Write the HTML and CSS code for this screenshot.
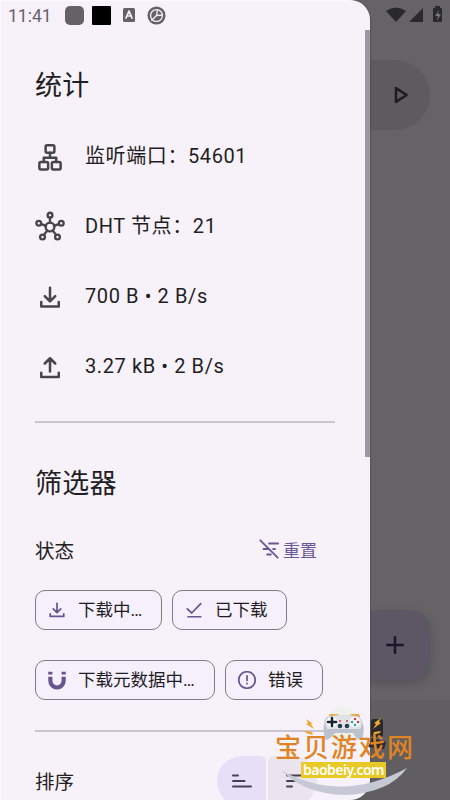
FILE: index.html
```html
<!DOCTYPE html>
<html lang="zh-CN">
<head>
<meta charset="utf-8">
<title>统计</title>
<link rel="stylesheet" href="styles.css">
</head>
<body>
<div class="screen">
  <main class="backdrop">
    <div class="search"><svg class="ic" viewBox="0 0 24 24"><path d="M8 6.500v11l8.500-5.500z"/></svg></div>
    <div class="fab"><svg viewBox="0 0 24 24"><path d="M12 5v14M5 12h14"/></svg></div>
    <div class="bottom-bar"></div>
  </main>

  <aside class="drawer">
    <h2 class="title">统计</h2>
    <div class="stat">
      <svg class="ic" viewBox="0 0 24 24"><rect x="8.500" y="2.500" width="7" height="6" rx="1.200"/><rect x="3.500" y="16" width="7" height="6" rx="1.200"/><rect x="13.500" y="16" width="7" height="6" rx="1.200"/><path d="M12 8.500v4M7 16v-3.500h10V16"/></svg>
      <span>监听端口：54601</span>
    </div>
    <div class="stat">
      <svg class="ic hub" viewBox="0 0 24 24"><circle cx="12" cy="12" r="3.500"/><circle cx="12" cy="2.500" r="1.900"/><circle cx="3" cy="9" r="1.900"/><circle cx="21" cy="9" r="1.900"/><circle cx="6" cy="20" r="1.900"/><circle cx="18" cy="20" r="1.900"/><path d="M12 4.500v4M4.900 9.700l3.900 1.300M19.100 9.700l-3.900 1.300M7.200 18.300l2.700-3.600M16.800 18.300l-2.700-3.600"/></svg>
      <span>DHT 节点：21</span>
    </div>
    <div class="stat">
      <svg class="ic" viewBox="0 0 24 24"><path d="M12 4.500v10.500M7.800 11.300l4.200 4.200 4.200-4.200M5 16v3.500h14V16"/></svg>
      <span>700 B • 2 B/s</span>
    </div>
    <div class="stat">
      <svg class="ic" viewBox="0 0 24 24"><path d="M12 15.500V5.500M7.800 9.200L12 5l4.200 4.200M5 16.500V20h14v-3.500"/></svg>
      <span>3.27 kB • 2 B/s</span>
    </div>
    <hr class="rule">
    <h2 class="title filter-title">筛选器</h2>
    <div class="section-head">
      <span>状态</span>
      <button class="reset"><svg viewBox="0 0 24 24"><path d="M2.500 2.500l19 19M12 6h10M6 12h5M16.500 12h2M10 18h4"/></svg>重置</button>
    </div>
    <div class="chips">
      <div class="chip downloading"><svg viewBox="0 0 24 24"><path d="M12 3v12M7 10.500l5 5 5-5M3 17v3.500h18V17"/></svg>下载中…</div>
      <div class="chip done"><svg viewBox="0 0 24 24"><path d="M3 10.500l6 5.500L21 3.500M4 21h17"/></svg>已下载</div>
    </div>
    <div class="chips">
      <div class="chip metadata"><svg class="magnet" viewBox="0 0 24 24"><path d="M4 8v5a8 8 0 0 0 16 0V8M4 2v3.500M20 2v3.500"/></svg>下载元数据中…</div>
      <div class="chip error"><svg viewBox="0 0 24 24"><circle cx="12" cy="12" r="11"/><path d="M12 6.500v6M12 16.500v.5"/></svg>错误</div>
    </div>
    <hr class="rule sort-rule">
    <div class="sort">
      <span>排序</span>
      <div class="segments">
        <div class="seg on"><svg viewBox="0 0 20 16"><path d="M1 2.500h5M1 8h11.500M1 13.500h18"/></svg></div>
        <div class="seg"><svg viewBox="0 0 20 16"><path d="M4 2.500h14M4 8h9M4 13.500h5"/></svg></div>
      </div>
    </div>
  </aside>
  <div class="scrollbar"></div>

  <header class="status">
    <span class="time">11:41</span>
    <i class="sq gray"></i><i class="sq black"></i>
    <svg class="badge-a" viewBox="0 0 12 14"><rect width="12" height="14" rx="1.500"/><path d="M3 10l3-7 3 7M4.300 8h3.400"/></svg>
    <svg class="badge-o" viewBox="0 0 20 20"><circle cx="10" cy="10" r="9.500" fill="#656167"/><circle cx="10" cy="10" r="6.200"/><path d="M10 10l1-6M10 10l6-.5M10 10l-5 5"/></svg>
    <svg class="sys" viewBox="0 0 58 18"><path d="M0 5Q10-2 20 5L10 16zM23 16L37 2v14z"/><path d="M47 3q0-1 1-1h1V0h5v2h1q1 0 1 1v12q0 1-1 1h-7q-1 0-1-1z"/><path d="M53 4l-4 6h3l-1 5 4-7h-3z" fill="#777578"/></svg>
  </header>

  <div class="watermark">
    <svg viewBox="0 0 150 100">
      <g fill="#29282b"><rect x="85" y="19" width="12" height="18" rx="3"/><path d="M86 38l14 4-2 7-16-2zM91 64h7v14h-7z"/></g>
      <circle cx="57" cy="26" r="18" fill="#eef0ec"/>
      <path d="M45 16h6M66 16h6" stroke="#e8ad48" stroke-width="4"/>
      <path d="M39 39C37 32 37 20 41 17q16-4 32 0c5 4 6 15 3 22-2 3-6-1-9-6H49c-4 5-8 8-10 6z" fill="#bbc1cd"/>
      <path d="M41 29q-4-7 1-12 16-4 31 0 5 6 1 12H41z" fill="#e0e4e9"/>
      <circle cx="46" cy="22" r="5" fill="white"/><circle cx="69" cy="22" r="5" fill="white"/>
      <path d="M46 18v8M42 22h8" stroke="#172633" stroke-width="2.500"/>
      <g fill="#d43b50"><circle cx="69" cy="19" r="1.300"/><circle cx="72" cy="22" r="1.300"/><circle cx="54" cy="21" r="1"/><circle cx="61" cy="21" r="1"/></g>
      <g fill="#259ab5"><circle cx="66" cy="22" r="1.300"/><circle cx="69" cy="25" r="1.300"/></g>
      <g fill="#293f50"><circle cx="54" cy="26" r="2.300"/><circle cx="61" cy="26" r="2.300"/></g>
      <g fill="#efa52f"><path d="M20 19l6 4-1 1 3 5-8-5 2-1zM95 18l-7 5 2 1-3 5 8-6-2-1zM19 31l7 1 1 3-7-2zM95 31l-7 1-1 3 7-2z"/></g>
      <path d="M-5 70Q55 104 121 68Q103 93 59 95Q18 94-5 70z" fill="#c6c9d5"/>
    </svg>
    <div class="wm-copy"><div class="wm-name">宝贝游戏网</div><div class="wm-url">baobeiy.com</div></div>
  </div>
</div>
</body>
</html>
```

FILE: styles.css
```css
* { box-sizing: border-box; }
body { margin: 0; background: #656366; font-family: Roboto, "Noto Sans CJK SC", sans-serif; color: #1f1e23; }
.screen { position: relative; width: 450px; height: 800px; overflow: hidden; }
svg { display: block; fill: none; stroke: currentColor; stroke-width: 2; stroke-linecap: round; stroke-linejoin: round; }

.backdrop { position: absolute; inset: 0; z-index: 0; display: flex; flex-direction: column; align-items: flex-end; padding-top: 60px; background: #656366; }
.search { width: 200px; height: 70px; margin-right: 20px; border-radius: 35px; background: #5d5b5e; display: flex; align-items: center; justify-content: flex-end; padding-right: 14px; color: #1c1b1e; }
.search svg { width: 30px; height: 30px; }
.fab { width: 70px; height: 70px; margin: 480px 20px 0 0; border-radius: 20px; background: #5d5665; box-shadow: 0 4px 9px #4d4b4eb0; display: grid; place-items: center; color: #1d1529; z-index: 1; }
.fab svg { width: 30px; height: 30px; stroke-linecap: butt; }
.bottom-bar { width: 100%; height: 100px; margin-top: 20px; background: #605e61; }

.drawer { position: absolute; z-index: 1; inset: 0 auto 0 0; width: 370px; padding: 49px 35px 0 34px; overflow: hidden; background: #f7f1f9; border-radius: 0 20px 20px 0; border-left: 1px solid #fdfaff; border-top: 1px solid #fdfaff; box-shadow: 1px 0 1px #49474b80; }
.title { margin: 0; height: 72px; line-height: 72px; font-size: 27px; font-weight: 400; letter-spacing: .2px; }
.stat { display: flex; align-items: center; gap: 20px; height: 70px; font-size: 20px; letter-spacing: .6px; line-height: 30px; white-space: nowrap; }
.stat svg { width: 30px; height: 30px; color: #47444c; }
.stat span { margin-top: -2px; }
.stat .hub { overflow: visible; stroke-width: 1.9; }
.rule { height: 2px; margin: 19px 0 0; border: 0; background: #cbc5d0; width: 300px; }
.filter-title { margin-top: 25px; }
.section-head { display: flex; align-items: center; justify-content: space-between; height: 58px; padding-right: 18px; font-size: 19.5px; }
.reset { display: flex; align-items: center; gap: 3px; border: 0; padding: 0; background: none; color: #6a5894; font: inherit; font-size: 17px; }
.reset svg { width: 22px; height: 22px; }
.chips { display: flex; gap: 10px; height: 40px; margin: 12px 0 30px; }
.chips + .chips { margin-top: 0; }
.chip { display: flex; align-items: center; height: 40px; border: 1.5px solid #817b86; border-radius: 10px; padding-left: 12px; gap: 12px; background: #f6effc; font-size: 17.5px; white-space: nowrap; line-height: 36px; }
.chip svg { width: 18px; height: 18px; color: #67558f; flex: none; stroke-width: 2.3; }
.downloading { width: 127px; }
.done { width: 115px; }
.metadata { width: 180px; }
.error { width: 98px; }
.chip .magnet { stroke-width: 5; stroke-linecap: butt; width: 20px; height: 20px; margin: 0 -1px; }
.sort-rule { margin: 0; }
.sort { display: flex; justify-content: space-between; height: 50px; margin-top: 24px; font-size: 19.5px; line-height: 53px; width: 282px; }
.segments { display: flex; gap: 2px; }
.seg { width: 49px; height: 50px; display: grid; place-items: center; border-radius: 6px; background: #ebe4ee; color: #49404f; }
.seg:last-child { border-radius: 6px 25px 25px 6px; }
.seg.on { border-radius: 25px 6px 6px 25px; background: #e7def8; }
.seg svg { width: 20px; height: 16px; }
.scrollbar { position: absolute; z-index: 2; left: 365px; top: 30px; width: 5px; height: 427px; background: #9c97a2; }

.status { position: absolute; z-index: 2; inset: 0 0 auto; height: 30px; display: flex; align-items: center; padding-left: 8px; color: #66616a; }
.time { width: 57px; font-size: 17.5px; padding-top: 2px; }
.sq { width: 19px; height: 19px; margin-right: 8px; border-radius: 5px; background: #656167; }
.black { background: #000; border-radius: 1px; }
.badge-a { width: 12px; height: 14px; margin: 0 12px 0 4px; fill: #656167; stroke: none; }
.badge-a path { fill: none; stroke: #f5f0f7; stroke-width: 1.700; }
.badge-o { width: 19px; height: 19px; stroke: #f2eef4; stroke-width: 1.400; }
.badge-o circle:first-child { stroke: none; }
.sys { width: 58px; height: 18px; margin-left: auto; margin-right: 6px; fill: #29282b; stroke: none; }

.watermark { position: absolute; z-index: 3; left: 286px; top: 700px; width: 150px; height: 100px; }
.watermark svg { width: 150px; height: 100px; overflow: visible; stroke: none; }
.wm-copy { position: absolute; left: -11px; top: 34px; width: 145px; display: flex; flex-direction: column; }
.wm-name { height: 28px; line-height: 28px; font-size: 26px; letter-spacing: 2px; color: #df8424; font-weight: 500; white-space: nowrap; }
.wm-url { width: 85px; height: 16px; margin-left: 26px; background: #e8c925; color: #fff; font: 600 14px/16px "Noto Sans", sans-serif; text-align: center; letter-spacing: -.5px; white-space: nowrap; }
```
